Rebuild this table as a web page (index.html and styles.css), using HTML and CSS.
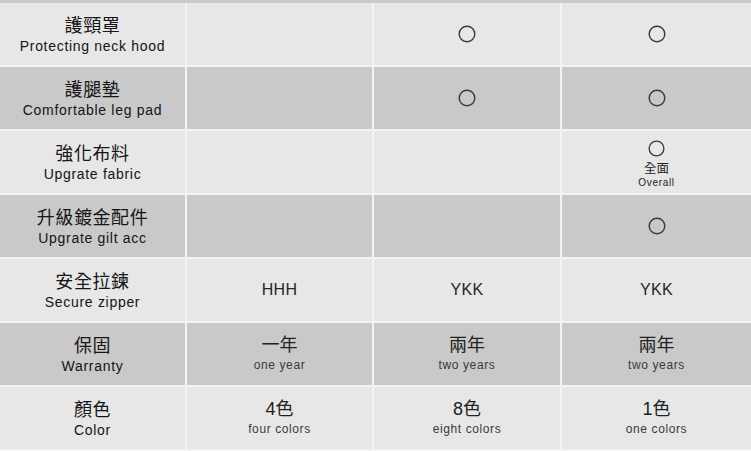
FILE: index.html
```html
<!DOCTYPE html>
<html lang="zh-Hant">
<head>
<meta charset="utf-8">
<title>規格比較</title>
<link rel="stylesheet" href="styles.css">
</head>
<body>
<div class="table">
  <div class="cell head light"><span class="zh">護頸罩</span><span class="en">Protecting neck hood</span></div>
  <div class="cell light"></div>
  <div class="cell light"><svg class="mark" viewBox="0 0 18 18"><circle cx="9" cy="9" r="7.8"/></svg></div>
  <div class="cell light"><svg class="mark" viewBox="0 0 18 18"><circle cx="9" cy="9" r="7.8"/></svg></div>

  <div class="cell head dark"><span class="zh">護腿墊</span><span class="en">Comfortable leg pad</span></div>
  <div class="cell dark"></div>
  <div class="cell dark"><svg class="mark" viewBox="0 0 18 18"><circle cx="9" cy="9" r="7.8"/></svg></div>
  <div class="cell dark"><svg class="mark" viewBox="0 0 18 18"><circle cx="9" cy="9" r="7.8"/></svg></div>

  <div class="cell head light"><span class="zh">強化布料</span><span class="en">Upgrate fabric</span></div>
  <div class="cell light"></div>
  <div class="cell light"></div>
  <div class="cell light overall"><svg class="mark small" viewBox="0 0 18 18"><circle cx="9" cy="9" r="7.8"/></svg><span class="note-zh">全面</span><span class="note-en">Overall</span></div>

  <div class="cell head dark"><span class="zh">升級鍍金配件</span><span class="en">Upgrate gilt acc</span></div>
  <div class="cell dark"></div>
  <div class="cell dark"></div>
  <div class="cell dark"><svg class="mark" viewBox="0 0 18 18"><circle cx="9" cy="9" r="7.8"/></svg></div>

  <div class="cell head light"><span class="zh">安全拉鍊</span><span class="en">Secure zipper</span></div>
  <div class="cell light"><span class="val">HHH</span></div>
  <div class="cell light"><span class="val">YKK</span></div>
  <div class="cell light"><span class="val">YKK</span></div>

  <div class="cell head dark"><span class="zh">保固</span><span class="en">Warranty</span></div>
  <div class="cell dark"><span class="dzh">一年</span><span class="den">one year</span></div>
  <div class="cell dark"><span class="dzh">兩年</span><span class="den">two years</span></div>
  <div class="cell dark"><span class="dzh">兩年</span><span class="den">two years</span></div>

  <div class="cell head light"><span class="zh">顏色</span><span class="en">Color</span></div>
  <div class="cell light"><span class="dzh">4色</span><span class="den">four colors</span></div>
  <div class="cell light"><span class="dzh">8色</span><span class="den">eight colors</span></div>
  <div class="cell light"><span class="dzh">1色</span><span class="den">one colors</span></div>
</div>
</body>
</html>
```

FILE: styles.css
```css
html, body {
  margin: 0;
  padding: 0;
  background: #f3f3f3;
}

body {
  width: 751px;
  height: 451px;
  overflow: hidden;
  font-family: "Liberation Sans", "Noto Sans CJK TC", sans-serif;
}

.table {
  display: grid;
  grid-template-columns: 185px 185px 186px 1fr;
  grid-auto-rows: 62px;
  gap: 2px;
  border-top: 3px solid #c9c9c9;
}

.cell {
  display: flex;
  flex-direction: column;
  align-items: center;
  justify-content: center;
}

.light { background: #e7e7e7; }
.dark { background: #c9c9c9; }

.zh {
  font-family: "Noto Sans CJK TC", sans-serif;
  font-size: 18px;
  line-height: 19px;
  color: #161616;
  letter-spacing: 0.6px;
}

.en {
  font-size: 14px;
  line-height: 16px;
  color: #141414;
  letter-spacing: 0.7px;
  margin-top: 4px;
}

.mark {
  width: 18px;
  height: 18px;
  fill: none;
  stroke: #3a3a3a;
  stroke-width: 1.4;
}

.mark.small {
  width: 17px;
  height: 17px;
}

.overall {
  padding-top: 4px;
}

.note-zh {
  font-family: "Noto Sans CJK TC", sans-serif;
  font-size: 12.5px;
  line-height: 13px;
  color: #222;
  margin-top: 4px;
}

.note-en {
  font-size: 10px;
  line-height: 10px;
  color: #222;
  letter-spacing: 0.7px;
  margin-top: 4px;
}

.val {
  font-size: 16px;
  color: #262626;
  letter-spacing: 0.3px;
}

.dzh {
  font-family: "Liberation Sans", "Noto Sans CJK TC", sans-serif;
  font-size: 18px;
  line-height: 19px;
  color: #222;
}

.den {
  font-size: 12px;
  line-height: 13px;
  color: #3a3a3a;
  letter-spacing: 0.6px;
  margin-top: 4px;
}
```
